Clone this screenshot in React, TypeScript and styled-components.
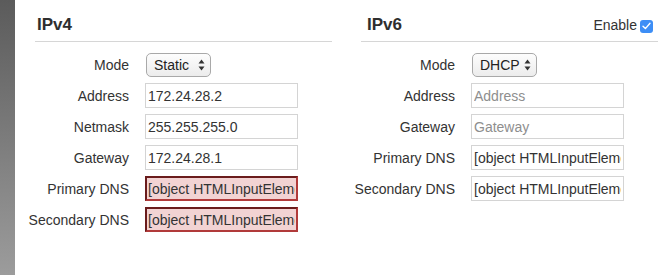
import styled, { createGlobalStyle } from 'styled-components';

const GlobalStyle = createGlobalStyle`
  html, body {
    margin: 0;
    padding: 0;
    background: #fff;
  }
  body {
    font-family: "Liberation Sans", Arial, Helvetica, sans-serif;
    color: #333;
  }
`

interface IField {
    label: string;
    value?: string;
    placeholder?: string;
    invalid?: boolean;
}

interface IPanelProps {
    title: string;
    mode: string;
    indent: number;
    enable?: boolean;
    fields: IField[];
}

const OBJ = '[object HTMLInputElement]';

const ipv4Fields: IField[] = [
    { label: 'Address', value: '172.24.28.2' },
    { label: 'Netmask', value: '255.255.255.0' },
    { label: 'Gateway', value: '172.24.28.1' },
    { label: 'Primary DNS', value: OBJ, invalid: true },
    { label: 'Secondary DNS', value: OBJ, invalid: true },
];

const ipv6Fields: IField[] = [
    { label: 'Address', placeholder: 'Address' },
    { label: 'Gateway', placeholder: 'Gateway' },
    { label: 'Primary DNS', value: OBJ },
    { label: 'Secondary DNS', value: OBJ },
];

const Arrows = () => (
    <ArrowIcon width="7" height="12" viewBox="0 0 7 12">
        <path d="M3.5 0.5 L6.5 4.5 L0.5 4.5 Z" fill="#333" />
        <path d="M3.5 11.5 L6.5 7.5 L0.5 7.5 Z" fill="#333" />
    </ArrowIcon>
)

const Panel = ({ title, mode, indent, enable, fields }: IPanelProps) => {
    return (
        <Section>
            <Header>
                <Title $indent={indent}>{title}</Title>
                {enable !== undefined && (
                    <EnableLabel>
                        Enable
                        <CheckBox>
                            <svg width="9" height="8" viewBox="0 0 9 8">
                                <path d="M1 4.2 L3.4 6.6 L8 1.2" stroke="#fff" strokeWidth="1.4" fill="none" strokeLinecap="round" strokeLinejoin="round" />
                            </svg>
                        </CheckBox>
                    </EnableLabel>
                )}
            </Header>
            <Form>
                <Label>Mode</Label>
                <SelectWrap>
                    <Select defaultValue={mode}>
                        <option>Static</option>
                        <option>DHCP</option>
                    </Select>
                    <Arrows />
                </SelectWrap>
                {fields.map(f => (
                    <Row key={f.label}>
                        <Label>{f.label}</Label>
                        <Input
                            $invalid={f.invalid}
                            defaultValue={f.value}
                            placeholder={f.placeholder}
                            readOnly
                        />
                    </Row>
                ))}
            </Form>
        </Section>
    );
}

const App = () => (
    <>
        <GlobalStyle />
        <Page>
            <Sidebar />
            <Content>
                <Panel title="IPv4" mode="Static" indent={2} fields={ipv4Fields} />
                <Panel title="IPv6" mode="DHCP" indent={6} enable fields={ipv6Fields} />
            </Content>
        </Page>
    </>
)

const Page = styled.div`
display: flex;
height: 275px;
width: 669px;
overflow: hidden;
`

const Sidebar = styled.div`
width: 15px;
flex-shrink: 0;
background: linear-gradient(to bottom, #5b5b5b, #9c9c9c);
`

const Content = styled.div`
display: flex;
gap: 29px;
padding: 15px 0 0 20px;
`

const Section = styled.section`
width: 297px;
`

const Header = styled.div`
display: flex;
justify-content: space-between;
align-items: flex-start;
height: 26px;
padding-right: 5px;
border-bottom: 1px solid #d6d6d6;
`

const Title = styled.h2<{ $indent: number }>`
margin: 0;
padding-left: ${props => props.$indent}px;
font-size: 17px;
line-height: 20px;
font-weight: bold;
color: #2e2e2e;
`

const EnableLabel = styled.label`
display: flex;
align-items: center;
gap: 3px;
font-size: 14px;
line-height: 20px;
color: #333;
`

const CheckBox = styled.span`
display: inline-flex;
align-items: center;
justify-content: center;
width: 13px;
height: 13px;
margin-top: 2px;
border-radius: 3px;
background: #3d8ef6;
`

const Form = styled.div`
display: grid;
grid-template-columns: 94px auto;
column-gap: 16px;
row-gap: 6px;
align-items: center;
justify-items: start;
padding-top: 11px;
`

const Row = styled.div`
display: contents;
`

const Label = styled.span`
justify-self: end;
font-size: 14px;
color: #333;
white-space: nowrap;
`

const SelectWrap = styled.div`
position: relative;
margin-left: 1px;
`

const Select = styled.select`
appearance: none;
-webkit-appearance: none;
height: 24px;
padding: 0 16px 0 7px;
border: 1px solid #a9a9a9;
border-radius: 5px;
background: linear-gradient(to bottom, #fdfdfd, #ececec);
font-family: "Liberation Sans", Arial, sans-serif;
font-size: 14px;
color: #222;
`

const ArrowIcon = styled.svg`
position: absolute;
right: 6px;
top: 6px;
pointer-events: none;
`

const Input = styled.input<{ $invalid?: boolean }>`
box-sizing: border-box;
width: 153px;
height: 25px;
padding: 0 2px;
font-family: "Liberation Sans", Arial, sans-serif;
font-size: 14px;
color: #333;
outline: none;
border: 1px solid #d4d4d4;
background: #fff;
${props => props.$invalid && `
    border: 2px solid #b13a3a;
    border-top-color: #6a1c1c;
    border-left-color: #6a1c1c;
    background: #f2d3d3;
    padding: 0 1px;
`}
&::placeholder {
    color: #8e8e8e;
}
`

export default App;
